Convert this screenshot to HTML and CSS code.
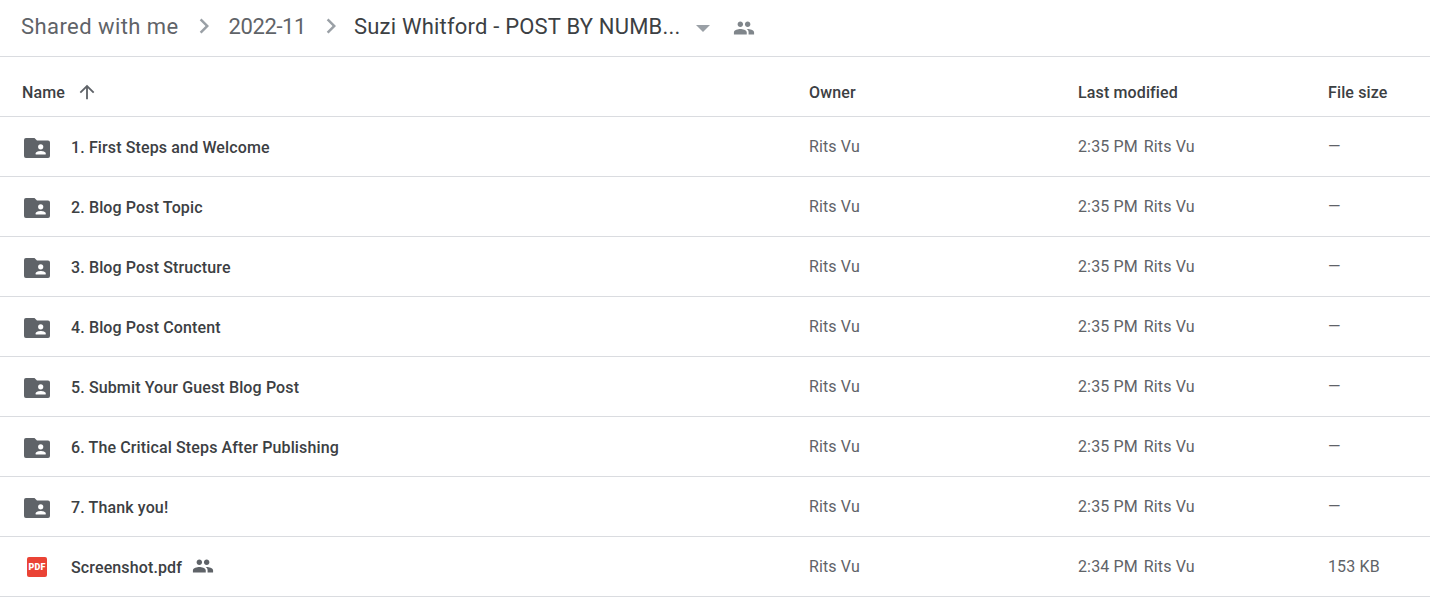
FILE: index.html
```html
<!DOCTYPE html>
<html lang="en">
<head>
    <meta charset="UTF-8">
    <meta name="viewport" content="width=device-width, initial-scale=1.0">
    <title>Suzi Whitford - POST BY NUMBERS - Google Drive</title>
    <link rel="stylesheet" href="styles.css">
</head>
<body>
    <svg class="icon-defs" width="0" height="0" aria-hidden="true">
        <symbol id="people" viewBox="0 0 24 24">
            <path d="M16 11c1.66 0 2.99-1.34 2.99-3S17.66 5 16 5s-3 1.34-3 3 1.34 3 3 3zm-8 0c1.66 0 2.99-1.34 2.99-3S9.66 5 8 5 5 6.34 5 8s1.34 3 3 3zm0 2c-2.33 0-7 1.17-7 3.5V19h14v-2.5C15 14.17 10.33 13 8 13zm8 0c-.29 0-.62.02-.97.05 1.16.84 1.97 1.97 1.97 3.45V19h6v-2.5c0-2.33-4.67-3.5-7-3.5z"/>
        </symbol>
        <symbol id="folder" viewBox="0 0 26 20">
            <path d="M2 0H10.500L13 2.500H24A2 2 0 0 1 26 4.500V18A2 2 0 0 1 24 20H2A2 2 0 0 1 0 18V2A2 2 0 0 1 2 0z"/>
            <circle cx="16.700" cy="8.800" r="2.600" fill="#fff"/>
            <path d="M11.700 16.500v-1.200c0-1.700 3.300-2.400 5-2.400s5 .7 5 2.400v1.200z" fill="#fff"/>
        </symbol>
        <symbol id="chevron" viewBox="0 0 24 24">
            <path d="M8.600 16.600 13.200 12 8.600 7.400 10 6l6 6-6 6z"/>
        </symbol>
    </svg>

    <header class="crumbs">
        <span class="crumb crumb-root">Shared with me</span>
        <svg class="crumb-sep"><use href="#chevron"/></svg>
        <span class="crumb crumb-year">2022-11</span>
        <svg class="crumb-sep"><use href="#chevron"/></svg>
        <span class="crumb crumb-current">Suzi Whitford - POST BY NUMB...</span>
        <span class="crumb-caret"></span>
        <svg class="crumb-people"><use href="#people"/></svg>
    </header>

    <div class="file-list">
        <div class="row row-head">
            <div class="col-name">Name
                <svg class="sort-arrow" viewBox="0 0 24 24"><path d="M4 12l1.410 1.410L11 7.830V20h2V7.830l5.580 5.590L20 12l-8-8-8 8z"/></svg>
            </div>
            <div>Owner</div>
            <div>Last modified</div>
            <div>File size</div>
        </div>

        <div class="row">
            <div class="col-name"><svg class="file-icon folder"><use href="#folder"/></svg>1. First Steps and Welcome</div>
            <div class="cell">Rits Vu</div>
            <div class="cell"><span class="time">2:35 PM</span>Rits Vu</div>
            <div class="cell">—</div>
        </div>
        <div class="row">
            <div class="col-name"><svg class="file-icon folder"><use href="#folder"/></svg>2. Blog Post Topic</div>
            <div class="cell">Rits Vu</div>
            <div class="cell"><span class="time">2:35 PM</span>Rits Vu</div>
            <div class="cell">—</div>
        </div>
        <div class="row">
            <div class="col-name"><svg class="file-icon folder"><use href="#folder"/></svg>3. Blog Post Structure</div>
            <div class="cell">Rits Vu</div>
            <div class="cell"><span class="time">2:35 PM</span>Rits Vu</div>
            <div class="cell">—</div>
        </div>
        <div class="row">
            <div class="col-name"><svg class="file-icon folder"><use href="#folder"/></svg>4. Blog Post Content</div>
            <div class="cell">Rits Vu</div>
            <div class="cell"><span class="time">2:35 PM</span>Rits Vu</div>
            <div class="cell">—</div>
        </div>
        <div class="row">
            <div class="col-name"><svg class="file-icon folder"><use href="#folder"/></svg>5. Submit Your Guest Blog Post</div>
            <div class="cell">Rits Vu</div>
            <div class="cell"><span class="time">2:35 PM</span>Rits Vu</div>
            <div class="cell">—</div>
        </div>
        <div class="row">
            <div class="col-name"><svg class="file-icon folder"><use href="#folder"/></svg>6. The Critical Steps After Publishing</div>
            <div class="cell">Rits Vu</div>
            <div class="cell"><span class="time">2:35 PM</span>Rits Vu</div>
            <div class="cell">—</div>
        </div>
        <div class="row">
            <div class="col-name"><svg class="file-icon folder"><use href="#folder"/></svg>7. Thank you!</div>
            <div class="cell">Rits Vu</div>
            <div class="cell"><span class="time">2:35 PM</span>Rits Vu</div>
            <div class="cell">—</div>
        </div>
        <div class="row">
            <div class="col-name">
                <span class="file-icon pdf">PDF</span>Screenshot.pdf
                <svg class="shared"><use href="#people"/></svg>
            </div>
            <div class="cell">Rits Vu</div>
            <div class="cell"><span class="time">2:34 PM</span>Rits Vu</div>
            <div class="cell">153 KB</div>
        </div>
    </div>
</body>
</html>
```

FILE: styles.css
```css
body {
    font-family: Roboto, 'Liberation Sans', sans-serif;
    background-color: #fff;
    color: #3c4043;
    margin: 0;
    padding: 0;
    height: 599px;
    overflow: hidden;
}
.icon-defs {
    display: block;
}
.crumbs {
    display: flex;
    align-items: center;
    height: 56px;
    padding-left: 21px;
    border-bottom: 1px solid #dadce0;
    font-size: 22px;
}
.crumb {
    color: #5f6368;
    margin-bottom: 4px;
}
.crumb-root {
    letter-spacing: 0.43px;
}
.crumb-year {
    letter-spacing: -0.4px;
}
.crumb-current {
    color: #3c4043;
    letter-spacing: 0.2px;
    margin-left: -2px;
}
.crumb-sep {
    width: 30px;
    height: 30px;
    margin: 0 10px 4px;
    fill: #9aa0a6;
}
.crumb-caret {
    width: 0;
    height: 0;
    margin-left: 16px;
    border-left: 7px solid transparent;
    border-right: 7px solid transparent;
    border-top: 7px solid #9aa0a6;
}
.crumb-people {
    width: 22px;
    height: 22px;
    margin-left: 23px;
    fill: #80868b;
}
.row {
    display: grid;
    grid-template-columns: 809px 269px 250px 1fr;
    align-items: center;
    height: 59px;
    border-bottom: 1px solid #dadce0;
    font-size: 16px;
    letter-spacing: 0.13px;
}
.row-head {
    font-weight: 500;
    padding-top: 12px;
    height: 47px;
}
.col-name {
    display: flex;
    align-items: center;
    padding-left: 22px;
    padding-top: 2px;
    font-weight: 500;
}
.row-head .col-name {
    padding-top: 0;
}
.cell {
    color: #5f6368;
}
.time {
    margin-right: 6px;
}
.sort-arrow {
    width: 22px;
    height: 22px;
    margin-left: 11px;
    margin-bottom: 2px;
    fill: #5f6368;
}
.file-icon {
    flex: none;
    margin-right: 21px;
}
.folder {
    width: 26px;
    height: 20px;
    margin-left: 2px;
    fill: #5f6368;
}
.pdf {
    display: flex;
    justify-content: center;
    align-items: center;
    width: 20px;
    height: 20px;
    margin-left: 5px;
    margin-right: 24px;
    margin-bottom: 2px;
    background-color: #ea4335;
    border-radius: 2px;
    color: #fff;
    font-size: 9px;
    font-weight: 900;
    letter-spacing: 0.2px;
}
.shared {
    width: 22px;
    height: 22px;
    margin-left: 10px;
    margin-bottom: 3px;
    fill: #5f6368;
}
```
